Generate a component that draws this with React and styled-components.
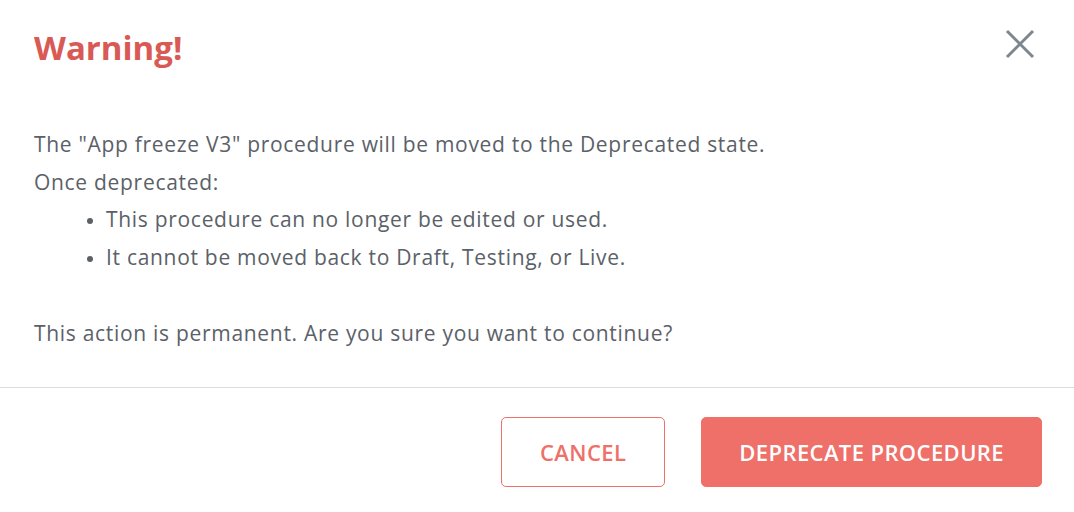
import React from 'react'
import styled, { createGlobalStyle } from 'styled-components'

const GlobalStyle = createGlobalStyle`
    html, body {
        margin: 0;
        padding: 0;
        background: #fff;
    }
    body {
        font-family: "Open Sans", "Liberation Sans", sans-serif;
    }
`

const Modal = styled.div`
    width: 1074px;
    height: 512px;
    background: #fff;
    display: flex;
    flex-direction: column;
`

const Header = styled.header`
    display: flex;
    justify-content: space-between;
    align-items: flex-start;
    padding: 23px 38px 0 34px;
`

const Title = styled.h2`
    margin: 0;
    font-size: 33px;
    line-height: 50px;
    font-weight: 700;
    color: #d95a55;
`

const CloseButton = styled.button`
    border: 0;
    background: none;
    padding: 0;
    margin-top: 5px;
    width: 32px;
    height: 32px;
    cursor: pointer;
    color: #7d878f;
`

const Body = styled.div`
    padding: 53px 34px 0;
    font-size: 21px;
    letter-spacing: 0.7px;
    line-height: 37.5px;
    color: #5b6168;
`

const Line = styled.p`
    margin: 0;
`

const List = styled.ul`
    margin: 0;
    padding-left: 72px;
    list-style: disc;

    li::marker {
        font-size: 18px;
    }
`

const Spacer = styled.div`
    height: 39px;
`

const Footer = styled.footer`
    margin-top: 34px;
    border-top: 1px solid #dcdcdc;
    display: flex;
    justify-content: flex-end;
    gap: 36px;
    padding: 29px 32px 0;
`

const Button = styled.button`
    height: 70px;
    padding: 0 ${p => p.$pad}px;
    border-radius: 5px;
    border: 1px solid #ee7069;
    background: ${p => (p.$primary ? '#ee7069' : '#fff')};
    color: ${p => (p.$primary ? '#fff' : '#ee7069')};
    font-family: "Open Sans", "Liberation Sans", sans-serif;
    font-size: 22px;
    letter-spacing: 0.4px;
    font-weight: 600;
    text-transform: uppercase;
    cursor: pointer;
`

const App = () => {
    return (
        <>
        <GlobalStyle />
        <Modal>
            <Header>
                <Title>Warning!</Title>
                <CloseButton aria-label="Close">
                    <svg width="32" height="32" viewBox="0 0 32 32">
                        <path d="M3 3 L29 29 M29 3 L3 29" stroke="currentColor" strokeWidth="3" />
                    </svg>
                </CloseButton>
            </Header>
            <Body>
                <Line>The "App freeze V3" procedure will be moved to the Deprecated state.</Line>
                <Line>Once deprecated:</Line>
                <List>
                    <li>This procedure can no longer be edited or used.</li>
                    <li>It cannot be moved back to Draft, Testing, or Live.</li>
                </List>
                <Spacer />
                <Line>This action is permanent. Are you sure you want to continue?</Line>
            </Body>
            <Footer>
                <Button $pad={38}>Cancel</Button>
                <Button $primary $pad={37}>Deprecate Procedure</Button>
            </Footer>
        </Modal>
        </>
    )
}

export default App
